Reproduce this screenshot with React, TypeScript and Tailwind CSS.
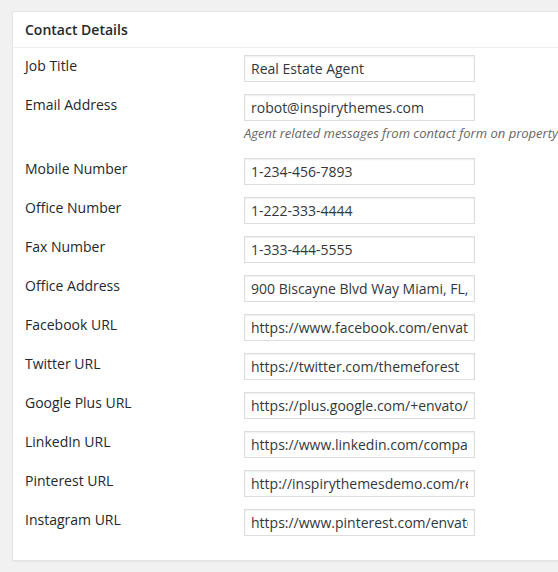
import React from "react";

const rows: { label: string; value: string; desc?: string }[] = [
  { label: "Job Title", value: "Real Estate Agent" },
  {
    label: "Email Address",
    value: "robot@inspirythemes.com",
    desc: "Agent related messages from contact form on property",
  },
  { label: "Mobile Number", value: "1-234-456-7893" },
  { label: "Office Number", value: "1-222-333-4444" },
  { label: "Fax Number", value: "1-333-444-5555" },
  { label: "Office Address", value: "900 Biscayne Blvd Way Miami, FL, USA" },
  { label: "Facebook URL", value: "https://www.facebook.com/envato" },
  { label: "Twitter URL", value: "https://twitter.com/themeforest" },
  { label: "Google Plus URL", value: "https://plus.google.com/+envato/posts" },
  { label: "LinkedIn URL", value: "https://www.linkedin.com/company/envato" },
  { label: "Pinterest URL", value: "http://inspirythemesdemo.com/realhomes" },
  { label: "Instagram URL", value: "https://www.pinterest.com/envato/" },
];

export default function App() {
  return (
    <div
      className="w-[558px] h-[572px] overflow-hidden bg-[#f1f1f1] pt-[11px] pl-[12px]"
      style={{ fontFamily: '"Open Sans", "Liberation Sans", sans-serif' }}
    >
      <div className="w-[700px] bg-white border border-[#e5e5e5] shadow-[0_1px_1px_rgba(0,0,0,0.04)]">
        <div className="h-[36px] flex items-center px-[12px] border-b border-[#eeeeee]">
          <h2 className="text-[14px] font-semibold text-[#23282d] leading-none">Contact Details</h2>
        </div>
        <div className="pt-[7px] pb-[24px] pl-[12px] flex flex-col gap-[12px]">
          {rows.map((r) => (
            <div key={r.label} className="flex">
              <div className="w-[219px] shrink-0 text-[14px] leading-[20px] text-[#23282d] pt-[1px]">
                {r.label}
              </div>
              <div className="flex flex-col">
                <input
                  readOnly
                  value={r.value}
                  className="w-[231px] h-[27px] border border-[#dddddd] bg-white px-[6px] text-[14px] text-[#32373c] shadow-[inset_0_1px_2px_rgba(0,0,0,0.07)] outline-none"
                  style={{ fontFamily: '"Open Sans", "Liberation Sans", sans-serif' }}
                />
                {r.desc && (
                  <p className="whitespace-nowrap italic text-[13px] leading-[20px] text-[#666666] pt-[2px] pb-[3px]">
                    {r.desc}
                  </p>
                )}
              </div>
            </div>
          ))}
        </div>
      </div>
    </div>
  );
}
